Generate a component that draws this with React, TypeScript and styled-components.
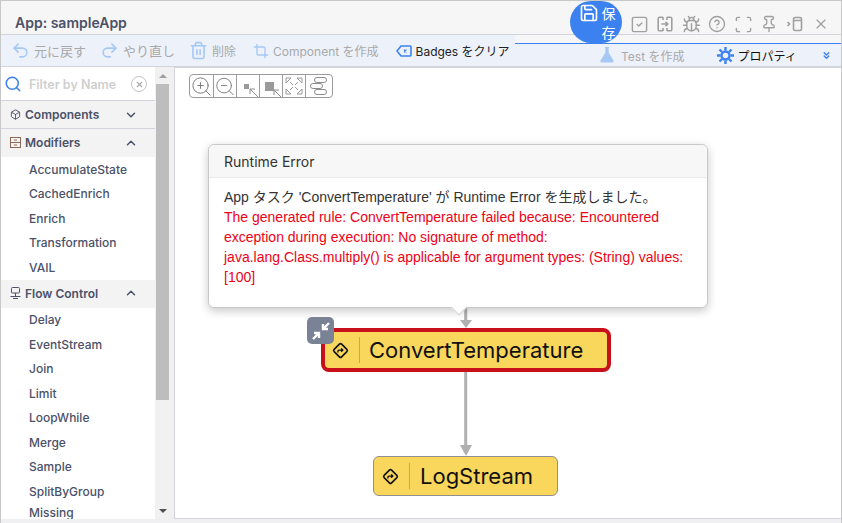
import styled, { createGlobalStyle } from "styled-components";
import {
  Box,
  Bug,
  ChevronDown,
  ChevronUp,
  ChevronsDown,
  CircleHelp,
  Crop,
  Pin,
  Redo2,
  Save,
  Scan,
  Search,
  SquareCheck,
  Trash2,
  Undo2,
  X,
  ZoomIn,
  ZoomOut,
} from "lucide-react";

const FONT = `Inter, "Noto Sans CJK JP", sans-serif`;
const BODY_FONT = `"Liberation Sans", "Noto Sans CJK JP", sans-serif`;
const BLUE = "#3b82f0";
const SOFT_BLUE = "#a5c8f5";
const MUTED = "#a9a9a9";
const SLATE = "#4b5168";
const ICON_GREY = "#a0a0a0";

const GlobalStyle = createGlobalStyle`
  html, body {
    margin: 0;
    padding: 0;
    background: #fff;
    font-family: ${FONT};
  }
  * { box-sizing: border-box; }
`;

const modifiers = ["AccumulateState", "CachedEnrich", "Enrich", "Transformation", "VAIL"];
const flowControl = ["Delay", "EventStream", "Join", "Limit", "LoopWhile", "Merge", "Sample", "SplitByGroup"];

const DiamondIcon = ({ size }: { size: number }) => (
  <svg width={size} height={size} viewBox="0 0 18 18" fill="none" stroke="#111" strokeWidth="1.5">
    <rect x="4" y="4" width="10" height="10" rx="1.5" transform="rotate(45 9 9)" />
    <path d="M6.6 10.8V9.4c0-.5.3-.8.8-.8h3.4M9.6 7l1.6 1.6-1.6 1.6" strokeWidth="1.3" />
  </svg>
);

const SplitIcon = () => (
  <svg width="16" height="16" viewBox="0 0 16 16" fill="none" stroke={ICON_GREY} strokeWidth="1.6">
    <path d="M6 1.2H2.6c-.8 0-1.4.6-1.4 1.4v10.8c0 .8.6 1.4 1.4 1.4H6M10 1.2h3.4c.8 0 1.4.6 1.4 1.4v10.8c0 .8-.6 1.4-1.4 1.4H10M6 1v3M6 12v3M10 1v3M10 12v3" />
    <path d="M4.5 8h6M8.5 5.8 10.8 8l-2.3 2.2" />
  </svg>
);

const PanelIcon = () => (
  <svg width="18" height="16" viewBox="0 0 18 16" fill="none" stroke={ICON_GREY} strokeWidth="1.6">
    <rect x="7.5" y="1.5" width="8" height="13" rx="1.5" />
    <path d="M7.5 4.5h8M1.5 6l2 2-2 2" />
  </svg>
);

const TagIcon = () => (
  <svg width="16" height="12" viewBox="0 0 16 12" fill="none" stroke={BLUE} strokeWidth="1.6">
    <path d="M5 1h9c.6 0 1 .4 1 1v8c0 .6-.4 1-1 1H5L1 6z" />
    <path d="M8 4.5l2.4 3M10.4 4.5 8 7.5" strokeWidth="1.2" />
  </svg>
);

const GearIcon = () => (
  <svg width="17" height="17" viewBox="0 0 17 17" fill="none" stroke={BLUE}>
    <circle cx="8.5" cy="8.5" r="4" strokeWidth="2.4" />
    <path
      d="M8.5 0v3.5M8.5 13.5V17M0 8.5h3.5M13.5 8.5H17M2.5 2.5 5 5M12 12l2.5 2.5M14.5 2.5 12 5M5 12l-2.5 2.5"
      strokeWidth="2.4"
    />
  </svg>
);

const FlaskIcon = () => (
  <svg width="14" height="16" viewBox="0 0 14 16" fill={SOFT_BLUE}>
    <path d="M5 0h4v1H8.6v4.6l4.9 8c.4.8-.1 1.9-1.1 1.9H1.6C.6 15.5.1 14.4.5 13.6l4.9-8V1H5z" />
  </svg>
);

const ModifierIcon = () => (
  <svg width="11" height="11" viewBox="0 0 11 11" fill="none" stroke="#8a6a55" strokeWidth="1">
    <rect x=".5" y=".5" width="10" height="10" />
    <path d="M.5 5.5h10M4 3h3M4 8h3" />
  </svg>
);

const FlowIcon = () => (
  <svg width="11" height="12" viewBox="0 0 11 12" fill="none" stroke={SLATE} strokeWidth="1">
    <rect x="1.5" y=".5" width="8" height="5.5" rx="1" />
    <path d="M5.5 6v3M.5 9.5h10M3 11.5h5" />
  </svg>
);

const FitSmallIcon = () => (
  <svg width="22" height="22" viewBox="0 0 22 22" fill="none" stroke="#8d8d8d">
    <rect x="7" y="9" width="5" height="5" fill="#9a9a9a" stroke="none" />
    <path d="M21 22 13 14M13 19v-5h5" />
  </svg>
);

const FitLargeIcon = () => (
  <svg width="22" height="22" viewBox="0 0 22 22" fill="none" stroke="#8d8d8d">
    <rect x="5" y="7" width="9" height="9" fill="#9a9a9a" stroke="none" />
    <path d="M21 22 14 15M14 20v-5h5" />
  </svg>
);

const ExpandIcon = () => (
  <svg width="18" height="18" viewBox="0 0 18 18" fill="none" stroke="#9a9a9a">
    <path d="M1 1h5L1 6zM17 1h-5l5 5zM1 17h5l-5-5zM17 17h-5l5-5zM5 5l3 3M13 5l-3 3M5 13l3-3M13 13l-3-3" />
  </svg>
);

const LayoutIcon = () => (
  <svg width="20" height="20" viewBox="0 0 20 20" fill="none" stroke="#8d8d8d">
    <rect x="5.5" y="1.5" width="12" height="5" rx="2.5" />
    <rect x="1.5" y="7.5" width="12" height="5" rx="2.5" />
    <rect x="5.5" y="13.5" width="12" height="5" rx="2.5" />
  </svg>
);

const CollapseIcon = () => (
  <svg width="20" height="20" viewBox="0 0 20 20" fill="none" stroke="#fff" strokeWidth="2.4">
    <path d="M18 2l-6 6M12 3v5h5M2 18l6-6M3 12h5v5" />
  </svg>
);

const App = () => (
  <Page>
    <GlobalStyle />
    <Header>
      <Title>App: sampleApp</Title>
      <HeaderActions>
        <SaveButton>
          <Save size={20} strokeWidth={2} />
          <SaveLabel>保存</SaveLabel>
        </SaveButton>
        <HeaderIcon><SquareCheck size={19} strokeWidth={1.8} /></HeaderIcon>
        <HeaderIcon><SplitIcon /></HeaderIcon>
        <HeaderIcon><Bug size={19} strokeWidth={1.8} /></HeaderIcon>
        <HeaderIcon><CircleHelp size={18} strokeWidth={1.8} /></HeaderIcon>
        <HeaderIcon><Scan size={19} strokeWidth={1.8} /></HeaderIcon>
        <HeaderIcon><Pin size={18} strokeWidth={1.8} /></HeaderIcon>
        <HeaderIcon><PanelIcon /></HeaderIcon>
        <HeaderIcon><X size={16} strokeWidth={1.8} /></HeaderIcon>
      </HeaderActions>
    </Header>

    <Toolbar>
      <ToolGroup>
        <Tool $wide><ToolIcon><Undo2 size={19} color={SOFT_BLUE} /></ToolIcon>元に戻す</Tool>
        <Tool $wide><ToolIcon><Redo2 size={19} color={SOFT_BLUE} /></ToolIcon>やり直し</Tool>
        <Tool><ToolIcon><Trash2 size={19} color={SOFT_BLUE} /></ToolIcon>削除</Tool>
        <Tool><ToolIcon><Crop size={16} color={SOFT_BLUE} /></ToolIcon>Component を作成</Tool>
        <Tool $active><ToolIcon><TagIcon /></ToolIcon>Badges をクリア</Tool>
      </ToolGroup>
      <TabGroup>
        <Tool><FlaskIcon /><TestLabel>Test を作成</TestLabel></Tool>
        <PropertyTab><GearIcon />プロパティ</PropertyTab>
        <MoreTabs><ChevronsDown size={11} color={BLUE} strokeWidth={3} /></MoreTabs>
      </TabGroup>
    </Toolbar>

    <Main>
      <Sidebar>
        <Palette>
          <FilterRow>
            <Search size={18} color={BLUE} strokeWidth={2} />
            <FilterText>Filter by Name</FilterText>
            <ClearIcon><X size={9} strokeWidth={3} /></ClearIcon>
          </FilterRow>
          <Section>
            <Box size={11} color={SLATE} />
            <SectionName>Components</SectionName>
            <ChevronDown size={14} color={SLATE} strokeWidth={2.5} />
          </Section>
          <Section $open>
            <ModifierIcon />
            <SectionName>Modifiers</SectionName>
            <ChevronUp size={14} color={SLATE} strokeWidth={2.5} />
          </Section>
          <Items>
            {modifiers.map((name) => <Item key={name}>{name}</Item>)}
          </Items>
          <Section $open>
            <FlowIcon />
            <SectionName>Flow Control</SectionName>
            <ChevronUp size={14} color={SLATE} strokeWidth={2.5} />
          </Section>
          <Items>
            {flowControl.map((name) => <Item key={name}>{name}</Item>)}
            <LastItem>Missing</LastItem>
          </Items>
        </Palette>
        <Scrollbar>
          <ScrollArrow />
          <ScrollThumb />
          <ScrollArrow $down />
        </Scrollbar>
      </Sidebar>

      <Canvas>
        <ZoomBar>
          <ZoomButton><ZoomIn size={23} strokeWidth={1} color="#777" /></ZoomButton>
          <ZoomButton><ZoomOut size={23} strokeWidth={1} color="#777" /></ZoomButton>
          <ZoomButton><FitSmallIcon /></ZoomButton>
          <ZoomButton><FitLargeIcon /></ZoomButton>
          <ZoomButton><ExpandIcon /></ZoomButton>
          <ZoomButton><LayoutIcon /></ZoomButton>
        </ZoomBar>

        <Edges width="664" height="450" viewBox="0 0 664 450">
          <path d="M290.7 230V254M290.7 304V380" stroke="#b0b0b0" strokeWidth="3" fill="none" />
          <path d="M285 252h12l-6 8zM285 377h12l-6 11z" fill="#b0b0b0" />
        </Edges>

        <Popover>
          <PopoverHeader>Runtime Error</PopoverHeader>
          <PopoverBody>
            App タスク 'ConvertTemperature' が Runtime Error を生成しました。
            <ErrorText>
              The generated rule: ConvertTemperature failed because: Encountered exception during
              execution: No signature of method: java.lang.Class.multiply() is applicable for
              argument types: (String) values: [100]
            </ErrorText>
          </PopoverBody>
          <PopoverArrow />
        </Popover>

        <CollapseBadge><CollapseIcon /></CollapseBadge>
        <ConvertNode>
          <DiamondIcon size={19} />
          <NodeDivider />
          ConvertTemperature
        </ConvertNode>
        <LogNode>
          <DiamondIcon size={19} />
          <NodeDivider />
          LogStream
        </LogNode>
      </Canvas>
    </Main>
  </Page>
);

export default App;

const Page = styled.div`
  width: 842px;
  height: 523px;
  display: flex;
  flex-direction: column;
  overflow: hidden;
  background: #f0f0f2;
  border: 1px solid #c8c8c8;
  border-bottom: none;
`;

const Header = styled.header`
  flex: 0 0 34px;
  min-height: 0;
  display: flex;
  align-items: flex-start;
  justify-content: space-between;
  background: #f6f6f6;
  border-bottom: 1px solid #d3d3dc;
  position: relative;
  z-index: 2;
`;

const Title = styled.h1`
  margin: 13px 0 0 14px;
  font-size: 14px;
  line-height: 17px;
  font-weight: 600;
  color: ${SLATE};
`;

const HeaderActions = styled.div`
  display: flex;
  align-items: flex-start;
  padding-right: 7px;
`;

const SaveButton = styled.button`
  width: 52px;
  height: 42px;
  margin: 0 4px 0 0;
  padding: 2px 0 0 9px;
  display: flex;
  align-items: flex-start;
  gap: 2px;
  border: none;
  border-radius: 21px;
  background: ${BLUE};
  color: #fff;
  font: 14px/19px ${FONT};
`;

const SaveLabel = styled.span`
  width: 15px;
  margin-top: 1px;
  word-break: break-all;
`;

const HeaderIcon = styled.span`
  width: 26px;
  height: 16px;
  margin-top: 15px;
  display: flex;
  align-items: center;
  justify-content: center;
  color: ${ICON_GREY};
`;

const Toolbar = styled.div`
  flex: 0 0 32px;
  display: flex;
  background: #f6f6f6;
  border-bottom: 1px solid #d3d3dc;
`;

const ToolGroup = styled.div`
  display: flex;
  align-items: center;
  gap: 14px;
  padding-left: 10px;
  width: 514px;
  background: #edf1fa;
`;

const TabGroup = styled.div`
  flex: 1;
  margin-top: 8px;
  display: flex;
  align-items: center;
  padding-left: 85px;
  background: #edf1fa;
  border-top: 1.5px solid ${BLUE};
`;

const Tool = styled.span<{ $active?: boolean; $wide?: boolean }>`
  display: flex;
  align-items: center;
  gap: 4px;
  font-size: ${(p) => (p.$wide ? "13px" : "12px")};
  white-space: nowrap;
  color: ${(p) => (p.$active ? "#222" : MUTED)};
`;

const ToolIcon = styled.span`
  width: 19px;
  display: flex;
  align-items: center;
  justify-content: flex-end;
`;

const TestLabel = styled.span`
  margin-left: 3px;
`;

const PropertyTab = styled.span`
  display: flex;
  align-items: center;
  gap: 3px;
  margin-left: 33px;
  font-size: 12px;
  color: #111;
`;

const MoreTabs = styled.span`
  display: flex;
  margin-left: 24px;
`;

const Main = styled.div`
  flex: 1;
  min-height: 0;
  display: flex;
  padding-bottom: 4px;
  background: #f0f0f2;
`;

const Sidebar = styled.aside`
  flex: 0 0 169px;
  display: flex;
  overflow: hidden;
  background: #fff;
`;

const Palette = styled.div`
  flex: 0 0 154px;
  overflow: hidden;
`;

const FilterRow = styled.div`
  height: 34px;
  display: flex;
  align-items: center;
  padding: 1px 8px 0 3px;
  border-bottom: 1px solid #d3d3dc;
`;

const FilterText = styled.span`
  flex: 1;
  margin-left: 7px;
  font-size: 12.5px;
  font-weight: 600;
  color: #cfcfcf;
`;

const ClearIcon = styled.span`
  width: 16px;
  height: 16px;
  display: flex;
  align-items: center;
  justify-content: center;
  border: 1.3px solid #c4c4c4;
  border-radius: 50%;
  color: #a8a8a8;
`;

const Section = styled.div<{ $open?: boolean }>`
  height: 28px;
  display: flex;
  align-items: center;
  gap: 4px;
  padding: 0 17px ${(p) => (p.$open ? "1px" : "0")} 9px;
  background: #f3f3f3;
  border-bottom: ${(p) => (p.$open ? "none" : "1px solid #d3d3dc")};
`;

const SectionName = styled.span`
  flex: 1;
  font-size: 12px;
  font-weight: 600;
  color: ${SLATE};
`;

const Items = styled.div`
  padding: 0 0 0 28px;
`;

const Item = styled.div`
  height: 24.5px;
  display: flex;
  align-items: center;
  font-size: 12px;
  font-weight: 500;
  color: ${SLATE};
`;

const LastItem = styled(Item)`
  height: 13px;
  margin-top: 2.5px;
  line-height: 13px;
`;

const Scrollbar = styled.div`
  flex: 0 0 15px;
  display: flex;
  flex-direction: column;
  background: #f1f1f1;
`;

const ScrollArrow = styled.div<{ $down?: boolean }>`
  height: 17px;
  margin: ${(p) => (p.$down ? "auto 0 0" : "0")};
  display: flex;
  justify-content: center;
  align-items: center;
  &::after {
    content: "";
    border-left: 4px solid transparent;
    border-right: 4px solid transparent;
    ${(p) => (p.$down ? "border-top: 4px solid #505050;" : "border-bottom: 4px solid #a0a0a0;")}
  }
`;

const ScrollThumb = styled.div`
  height: 316px;
  margin: 0 1px;
  background: #bdbdbd;
`;

const Canvas = styled.section`
  flex: 1;
  margin-left: 4px;
  position: relative;
  background: #fff;
  border: 1px solid #d3d3dc;
  border-right: none;
`;

const Edges = styled.svg`
  position: absolute;
  left: 0;
  top: 0;
`;

const ZoomBar = styled.div`
  position: absolute;
  left: 14px;
  top: 6px;
  display: flex;
  height: 24px;
  border: 1px solid #9b9b9b;
  border-radius: 4px;
  overflow: hidden;
  background: #fff;
`;

const ZoomButton = styled.span`
  width: 23px;
  display: flex;
  align-items: center;
  justify-content: center;
  border-right: 1px solid #9b9b9b;
  &:first-child { width: 24px; }
  &:last-child { width: 26px; border-right: none; }
`;

const Popover = styled.div`
  position: absolute;
  left: 33px;
  top: 76px;
  width: 500px;
  height: 164px;
  background: #fff;
  border: 1px solid #c9c9c9;
  border-radius: 6px;
  box-shadow: 0 3px 10px rgba(0, 0, 0, 0.22);
`;

const PopoverHeader = styled.div`
  height: 33px;
  padding-left: 15px;
  display: flex;
  align-items: center;
  font-size: 14px;
  color: #333;
  background: #f7f7f7;
  border-bottom: 1px solid #ebebeb;
  border-radius: 6px 6px 0 0;
`;

const PopoverBody = styled.div`
  padding: 9px 15px;
  font-family: ${BODY_FONT};
  font-size: 14px;
  line-height: 20px;
  color: #333;
`;

const ErrorText = styled.div`
  color: #f00015;
`;

const PopoverArrow = styled.div`
  position: absolute;
  left: 244px;
  bottom: -6px;
  width: 12px;
  height: 12px;
  background: #fff;
  border-right: 1px solid #d4d4d4;
  border-bottom: 1px solid #d4d4d4;
  transform: rotate(45deg);
`;

const CollapseBadge = styled.div`
  position: absolute;
  left: 132px;
  top: 249px;
  z-index: 1;
  width: 27px;
  height: 27px;
  display: flex;
  align-items: center;
  justify-content: center;
  background: #7a8296;
  border-radius: 5px;
`;

const NodeDivider = styled.span`
  width: 1px;
  height: 26px;
  margin: 0 9px;
  background: #c9a94a;
`;

const FlowNode = styled.div`
  position: absolute;
  display: flex;
  align-items: center;
  background: #f9d65c;
  color: #111;
  font-size: 22px;
`;

const ConvertNode = styled(FlowNode)`
  left: 146px;
  top: 260px;
  width: 290px;
  height: 44px;
  padding-left: 6px;
  border: 4px solid #c8101a;
  border-radius: 8px;
`;

const LogNode = styled(FlowNode)`
  left: 198px;
  top: 388px;
  width: 185px;
  height: 40px;
  padding-left: 7px;
  border: 1px solid #8f8f8f;
  border-radius: 6px;
  ${NodeDivider} {
    margin-right: 10px;
  }
`;
